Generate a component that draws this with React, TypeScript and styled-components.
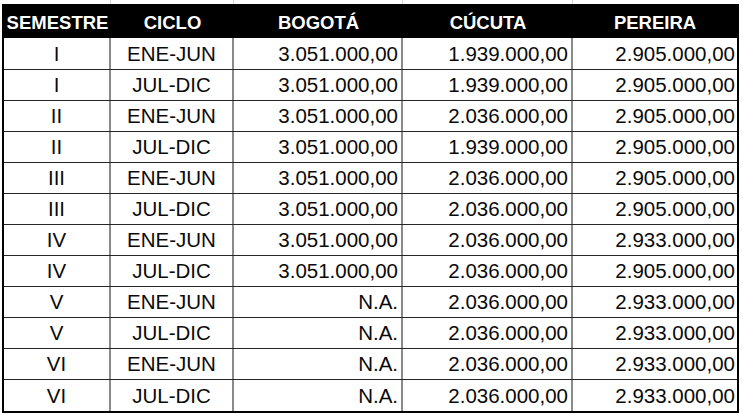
import React from 'react'
import styled, { createGlobalStyle } from 'styled-components'

const GlobalStyle = createGlobalStyle`
  body {
    margin: 0;
    background: #ffffff;
    font-family: "Liberation Sans", Arial, sans-serif;
  }
`

const COLS = '107px 123px 169px 170px 164px'

const Sheet = styled.div`
  width: 743px;
  height: 414px;
  overflow: hidden;
  padding-left: 2px;
  box-sizing: border-box;
`

const TopStrip = styled.div`
  display: grid;
  grid-template-columns: ${COLS};
  height: 4px;
  margin-left: 2px;
`

const StripCell = styled.div`
  border-right: 1px solid #d6d6d6;
  &:last-child {
    border-right: none;
  }
`

const Table = styled.div`
  width: 737px;
  box-sizing: border-box;
  border: 2px solid #000;
  border-top: none;
`

const HeadRow = styled.div`
  display: grid;
  grid-template-columns: ${COLS};
  height: 34px;
  background: #000;
`

const HeadCell = styled.div`
  display: flex;
  align-items: center;
  justify-content: center;
  padding-top: 4px;
  box-sizing: border-box;
  color: #fff;
  font-weight: bold;
  font-size: 18.5px;
  white-space: nowrap;
`

const Row = styled.div<{ $first?: boolean; $last?: boolean }>`
  display: grid;
  grid-template-columns: ${COLS};
  height: ${(p) => (p.$first ? 32 : 31)}px;
  box-sizing: border-box;
  border-bottom: ${(p) => (p.$last ? 'none' : '1px solid #262626')};
`

const Cell = styled.div<{ $align: 'center' | 'right' }>`
  display: flex;
  align-items: center;
  justify-content: ${(p) => (p.$align === 'right' ? 'flex-end' : 'center')};
  padding-right: ${(p) => (p.$align === 'right' ? '3px' : '0')};
  box-sizing: border-box;
  border-right: 2px solid #8a8a8a;
  color: #0a0a0a;
  font-size: 20.5px;
  white-space: nowrap;
  &:last-child {
    border-right: none;
    padding-right: 2px;
  }
`

const headers = ['SEMESTRE', 'CICLO', 'BOGOTÁ', 'CÚCUTA', 'PEREIRA']

const rows = [
  ['I', 'ENE-JUN', '3.051.000,00', '1.939.000,00', '2.905.000,00'],
  ['I', 'JUL-DIC', '3.051.000,00', '1.939.000,00', '2.905.000,00'],
  ['II', 'ENE-JUN', '3.051.000,00', '2.036.000,00', '2.905.000,00'],
  ['II', 'JUL-DIC', '3.051.000,00', '1.939.000,00', '2.905.000,00'],
  ['III', 'ENE-JUN', '3.051.000,00', '2.036.000,00', '2.905.000,00'],
  ['III', 'JUL-DIC', '3.051.000,00', '2.036.000,00', '2.905.000,00'],
  ['IV', 'ENE-JUN', '3.051.000,00', '2.036.000,00', '2.933.000,00'],
  ['IV', 'JUL-DIC', '3.051.000,00', '2.036.000,00', '2.905.000,00'],
  ['V', 'ENE-JUN', 'N.A.', '2.036.000,00', '2.933.000,00'],
  ['V', 'JUL-DIC', 'N.A.', '2.036.000,00', '2.933.000,00'],
  ['VI', 'ENE-JUN', 'N.A.', '2.036.000,00', '2.933.000,00'],
  ['VI', 'JUL-DIC', 'N.A.', '2.036.000,00', '2.933.000,00'],
]

const App = () => (
  <Sheet>
    <GlobalStyle />
    <TopStrip>
      {headers.map((h) => (
        <StripCell key={h} />
      ))}
    </TopStrip>
    <Table>
      <HeadRow>
        {headers.map((h) => (
          <HeadCell key={h}>{h}</HeadCell>
        ))}
      </HeadRow>
      {rows.map((r, i) => (
        <Row key={i} $first={i === 0} $last={i === rows.length - 1}>
          {r.map((v, j) => (
            <Cell key={j} $align={j < 2 ? 'center' : 'right'}>
              {v}
            </Cell>
          ))}
        </Row>
      ))}
    </Table>
  </Sheet>
)

export default App
